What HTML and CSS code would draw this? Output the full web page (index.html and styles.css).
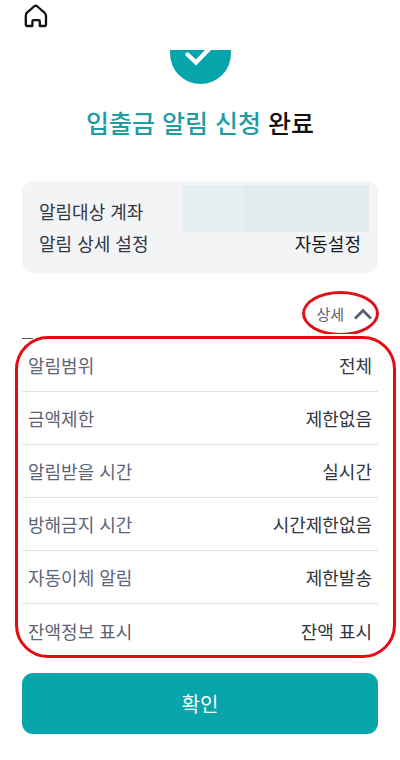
FILE: index.html
```html
<!DOCTYPE html>
<html lang="ko">
<head>
  <meta charset="UTF-8">
  <title>입출금 알림 신청 완료</title>
  <meta name="viewport" content="width=device-width, initial-scale=1.0">
  <link rel="stylesheet" href="styles.css">
</head>
<body>

  <header class="top-bar">
    <a class="home-link" href="#" aria-label="홈">
      <svg width="24" height="24" viewBox="0 0 24 24" fill="none" stroke="#111" stroke-width="2.3" stroke-linejoin="round" stroke-linecap="round">
        <path d="M3 8.600 L10.600 2 Q11.700 1.200 12.800 2 L20.400 8.600 Q22 10 22 12 V20.600 Q22 22 20.600 22 H15.800 V17.400 Q15.800 16.200 14.600 16.200 H9.600 Q8.400 16.200 8.400 17.400 V22 H3.200 Q1.800 22 1.800 20.600 V12 Q1.800 9.800 3 8.600 Z"/>
      </svg>
    </a>
  </header>

  <main class="page">
    <div class="done-mark">
      <svg width="61" height="34" viewBox="0 0 61 34">
        <circle cx="30.5" cy="3.5" r="30.5" fill="#06a5ac"/>
        <path d="M17.500 4.500 L26 12.500 L41 -3" fill="none" stroke="#fff" stroke-width="4.400" stroke-linecap="round"/>
      </svg>
    </div>
    <h1 class="title"><span class="point">입출금 알림 신청</span> 완료</h1>

    <!-- 계좌 요약 -->
    <dl class="summary">
      <div class="summary-row">
        <dt>알림대상 계좌</dt>
        <dd class="masked"></dd>
      </div>
      <div class="summary-row">
        <dt>알림 상세 설정</dt>
        <dd>자동설정</dd>
      </div>
    </dl>

    <div class="toggle-row">
      <button class="toggle" type="button" aria-expanded="true" aria-controls="detail">
        상세
        <svg width="18" height="12" viewBox="0 0 18 12" fill="none" stroke="#566176" stroke-width="2.8">
          <path d="M1 10.500 L9 2.500 L17 10.500"/>
        </svg>
      </button>
    </div>

    <!-- 상세 설정 목록 -->
    <dl class="detail" id="detail">
      <div class="detail-row"><dt>알림범위</dt><dd>전체</dd></div>
      <div class="detail-row"><dt>금액제한</dt><dd>제한없음</dd></div>
      <div class="detail-row"><dt>알림받을 시간</dt><dd>실시간</dd></div>
      <div class="detail-row"><dt>방해금지 시간</dt><dd>시간제한없음</dd></div>
      <div class="detail-row"><dt>자동이체 알림</dt><dd>제한발송</dd></div>
      <div class="detail-row"><dt>잔액정보 표시</dt><dd>잔액 표시</dd></div>
    </dl>

    <button class="confirm" type="button">확인</button>
  </main>

</body>
</html>
```
FILE: styles.css
```css
* { margin:0; padding:0; box-sizing:border-box; }

body {
  background:#fff;
  color:#33363f;
  font-family:"Noto Sans CJK KR", sans-serif;
  font-size:18px;
  line-height:32px;
}
button { font-family:inherit; cursor:pointer; }

/* 상단 */
.top-bar { display:flex; height:50px; padding:4px 24px; }
.home-link { height:24px; }
.home-link svg { display:block; }

.page { display:flex; flex-direction:column; padding:0 22px 24px; }

/* 완료 표시 */
.done-mark { display:flex; justify-content:center; }
.done-mark svg { display:block; }
.title {
  margin-top:18px;
  color:#111;
  font-size:25px;
  font-weight:500;
  line-height:40px;
  text-align:center;
}
.point { color:#1c9ca3; }

/* 계좌 요약 */
.summary {
  margin-top:39px;
  padding:14px 17px;
  background:#f3f4f6;
  border-radius:11px;
}
.summary-row { display:flex; justify-content:space-between; height:32px; }
.summary-row dd { color:#16181d; }
.summary-row .masked {
  flex:0 0 187px;
  height:47px;
  margin:-10px -8px 0 0;
  background:linear-gradient(to right, #e5eff1 62px, #e0ecee 62px);
}

/* 상세 펼침 버튼 */
.toggle-row {
  display:flex;
  justify-content:flex-end;
  height:43px;
  margin:18px -1px 0 0;
  overflow:hidden;
}
.toggle {
  display:flex;
  align-items:center;
  justify-content:flex-end;
  gap:10px;
  width:77px;
  height:45px;
  padding-right:4px;
  background:none;
  border:3px solid #e01018;
  border-radius:50%;
  color:#566176;
  font-size:15px;
}

/* 상세 설정 목록 */
.detail { position:relative; margin-top:4px; padding-top:1px; }
.detail::before {
  content:"";
  position:absolute;
  top:0;
  left:0;
  width:11px;
  height:1px;
  background:#555;
}
.detail::after {
  content:"";
  position:absolute;
  inset:-2px -18px -1px -7px;
  border:3px solid #e60b12;
  border-radius:33px;
  pointer-events:none;
}
.detail-row {
  display:flex;
  align-items:center;
  justify-content:space-between;
  height:53px;
  padding:0 6px;
  border-bottom:1px solid #e2e3e5;
}
.detail-row:last-child { border-bottom:0; }
.detail-row dt { color:#5b6577; }

/* 확인 버튼 */
.confirm {
  height:61px;
  margin-top:16px;
  background:#06a5ac;
  border:0;
  border-radius:11px;
  color:#fff;
  font-size:20px;
}
```
